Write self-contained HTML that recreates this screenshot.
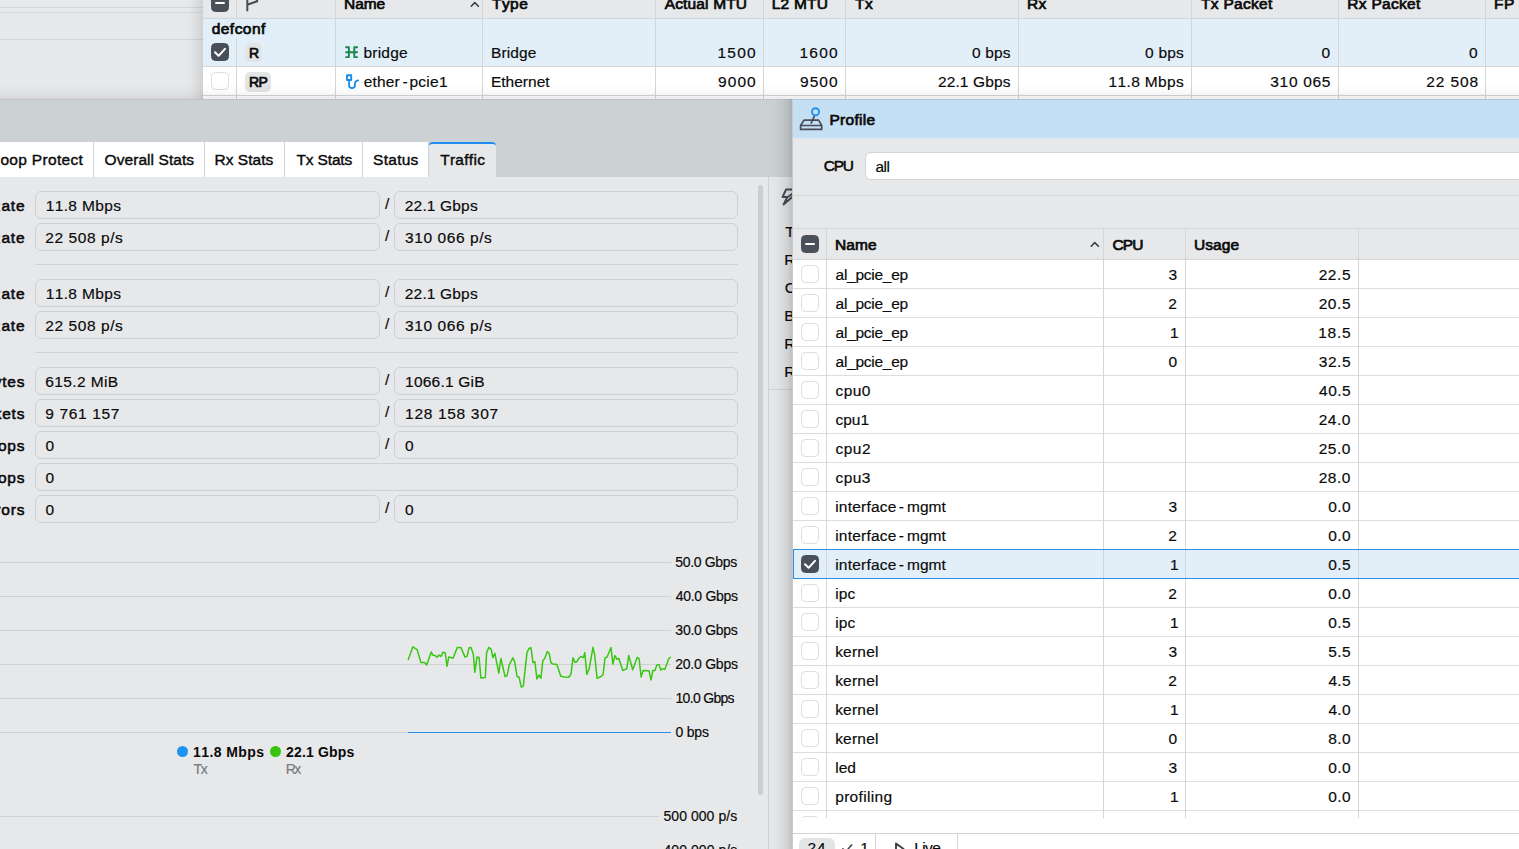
<!DOCTYPE html>
<html>
<head>
<meta charset="utf-8">
<title>WinBox</title>
<style>
*{box-sizing:border-box;margin:0;padding:0}
html,body{width:1519px;height:849px;overflow:hidden}
body{position:relative;background:#e7e8ea;font-family:"Liberation Sans",sans-serif;color:#0a0a0a;font-size:15.5px;font-kerning:none}
.abs{position:absolute}
.t{position:absolute;white-space:pre;line-height:20px;height:20px;font-weight:400;-webkit-text-stroke-width:.18px}
.b{font-weight:700;-webkit-text-stroke-width:0}
.m{-webkit-text-stroke-width:.4px}
.m2{-webkit-text-stroke-width:.55px}
.sb{-webkit-text-stroke-width:.72px}
#tl{left:0;top:0;width:203px;height:99px;background:#e7e8ea}
#tl i{position:absolute;left:0;width:203px;height:1px;background:#d3d5d8}
#tlshadow{left:187px;top:0;width:16px;height:99px;background:linear-gradient(to right,rgba(0,0,0,0),rgba(0,0,0,.03) 45%,rgba(0,0,0,.10))}
#tt{left:203px;top:0;width:1316px;height:99px;background:#fff}
#tt .hd{left:0;top:0;width:1316px;height:18px;background:#e7e8ea}
#tt .hl{left:0;width:1316px;height:1px;background:#d4d5d7}
#tt .vl{top:0;width:1px;height:99px;background:#d4d5d7}
#tt .sel{left:0;top:19px;width:1316px;height:47px;background:#e2eff9}
.cb{position:absolute;width:18px;height:18px;border-radius:4.5px;border:1px solid #dcdddf;background:#fff}
.cb.on{background:#4a505a;border-color:#4a505a}
.dash{position:absolute;left:3px;top:7px;width:10px;height:2px;background:#fff;border-radius:1px}
.badge{position:absolute;border-radius:5px;background:#e3e4e6}
#band{left:0;top:99px;width:1519px;height:78px;background:#ccd1d4}
#bandline{left:0;top:99px;width:1519px;height:1px;background:#c0c4c8}
.f{position:absolute;height:28px;border:1px solid #cdd1d5;border-radius:6px;background:#e7e8ea}
.sep{position:absolute;left:35px;width:703px;height:1px;background:#d0d2d5}
.gl{position:absolute;left:0;height:1px;background:#cfd1d4}
#pshadow{left:766px;top:99px;width:26px;height:750px;background:linear-gradient(to right,rgba(0,0,0,0) 0%,rgba(0,0,0,.015) 35%,rgba(0,0,0,.05) 62%,rgba(0,0,0,.105) 85%,rgba(0,0,0,.17) 100%)}
#pw{left:792px;top:99px;width:728px;height:750px;background:#e7e8ea;border-left:1px solid rgba(0,0,0,.13)}
#pw .ti{left:0;top:0;width:727px;height:39px;background:#c5dff4;border-top:1px solid rgba(0,0,0,.1)}
#pw .hl{left:0;width:727px;height:1px;background:#d4d5d7}
#pw .vl{width:1px;background:#d4d5d7}
</style>
</head>
<body>
<!-- top-left pane -->
<div id="tl" class="abs"><i style="top:7px"></i><i style="top:12px"></i><i style="top:39px"></i></div>
<div id="tlshadow" class="abs"></div>
<!-- interface table -->
<div id="tt" class="abs">
<div class="abs sel"></div><div class="abs hd"></div>
<div class="abs hl" style="top:18px"></div>
<div class="abs hl" style="top:66px"></div>
<div class="abs hl" style="top:95px"></div>
<div class="abs vl" style="left:33px;top:38px;height:61px"></div><div class="abs vl" style="left:33px;top:0;height:18px"></div>
<div class="abs vl" style="left:132px"></div>
<div class="abs vl" style="left:279px"></div>
<div class="abs vl" style="left:452px"></div>
<div class="abs vl" style="left:560px"></div>
<div class="abs vl" style="left:642px"></div>
<div class="abs vl" style="left:815px"></div>
<div class="abs vl" style="left:988px"></div>
<div class="abs vl" style="left:1135px"></div>
<div class="abs vl" style="left:1282px"></div>
<div class="cb on" style="left:8px;top:-6px"><b class="dash"></b></div>
<svg class="abs" style="left:40px;top:-6px" width="20" height="18" viewBox="0 0 20 18"><path d="M4.3 0V16.4 M4.3 10.7L14.2 7.2V0" fill="none" stroke="#474d56" stroke-width="2" stroke-linecap="round" stroke-linejoin="round"/></svg>
<svg class="abs" style="left:266px;top:0" width="12" height="8" viewBox="0 0 12 8"><path d="M2.2 6.2L5.8 2.6L9.4 6.2" fill="none" stroke="#3c4148" stroke-width="1.6" stroke-linecap="round" stroke-linejoin="round"/></svg>
<div class="cb on" style="left:8px;top:43px"><svg width="18" height="18" viewBox="0 0 18 18" style="position:absolute;left:-1px;top:-1px"><path d="M4 9.3L7.6 12.8L14 5.8" fill="none" stroke="#fff" stroke-width="2" stroke-linecap="round" stroke-linejoin="round"/></svg></div>
<div class="cb" style="left:8px;top:72px"></div>
<div class="badge" style="left:42px;top:43px;width:17px;height:19px"></div>
<div class="badge" style="left:42px;top:72px;width:26px;height:19.5px"></div>
<svg class="abs" style="left:141px;top:44px" width="18" height="16" viewBox="0 0 18 16"><path d="M2.1 3.3H4.9 M2.1 8.2H13.1 M2.1 13.1H4.9 M10.3 3.3H13.1 M10.3 13.1H13.1 M4.9 3.3V13.1 M10.3 3.3V13.1" fill="none" stroke="#17874e" stroke-width="1.9" stroke-linecap="round"/></svg>
<svg class="abs" style="left:141px;top:72px" width="18" height="18" viewBox="0 0 18 18"><path d="M3 3.2H7.2V8H3Z" fill="none" stroke="#1c8bea" stroke-width="1.9" stroke-linejoin="round"/><path d="M5.1 8.8V13.2A2.9 2.9 0 0 0 10.9 13.2V11.8Q10.9 9 14.2 8.4" fill="none" stroke="#1c8bea" stroke-width="1.8" stroke-linecap="round"/></svg>
</div>
<!-- interface table text -->
<span class="t sb" style="left:344.08px;top:-6.00px;font-size:15.5px;letter-spacing:-0.129px;">Name</span>
<span class="t sb" style="left:492.00px;top:-6.00px;font-size:15.5px;letter-spacing:0.450px;">Type</span>
<span class="t sb" style="left:664.72px;top:-6.00px;font-size:15.5px;letter-spacing:0.152px;">Actual MTU</span>
<span class="t sb" style="left:771.78px;top:-6.00px;font-size:15.5px;letter-spacing:0.209px;">L2 MTU</span>
<span class="t sb" style="left:855.00px;top:-6.00px;font-size:15.5px;letter-spacing:0.450px;">Tx</span>
<span class="t sb" style="left:1026.98px;top:-6.00px;font-size:15.5px;letter-spacing:0.450px;">Rx</span>
<span class="t sb" style="left:1201.00px;top:-6.00px;font-size:15.5px;letter-spacing:0.300px;">Tx Packet</span>
<span class="t sb" style="left:1347.28px;top:-6.00px;font-size:15.5px;letter-spacing:0.300px;">Rx Packet</span>
<span class="t sb" style="left:1494.08px;top:-6.00px;font-size:15.5px;letter-spacing:0.450px;">FP</span>
<span class="t sb" style="left:211.70px;top:19.00px;font-size:15.5px;letter-spacing:0.464px;">defconf</span>
<span class="t sb" style="left:248.90px;top:43.00px;font-size:14px;">R</span>
<span class="t sb" style="left:248.90px;top:72.00px;font-size:14px;letter-spacing:-0.600px;">RP</span>
<span class="t" style="left:363.50px;top:43.00px;font-size:15.5px;letter-spacing:0.200px;">bridge</span>
<span class="t" style="left:490.93px;top:43.00px;font-size:15.5px;letter-spacing:0.131px;">Bridge</span>
<span class="t" style="left:717.52px;top:43.00px;font-size:15.5px;letter-spacing:1.235px;">1500</span>
<span class="t" style="left:799.52px;top:43.00px;font-size:15.5px;letter-spacing:1.202px;">1600</span>
<span class="t" style="left:972.09px;top:43.00px;font-size:15.5px;letter-spacing:0.137px;">0 bps</span>
<span class="t" style="left:1145.09px;top:43.00px;font-size:15.5px;letter-spacing:0.187px;">0 bps</span>
<span class="t" style="left:1321.59px;top:43.00px;font-size:15.5px;letter-spacing:0.091px;">0</span>
<span class="t" style="left:1468.89px;top:43.00px;font-size:15.5px;letter-spacing:0.491px;">0</span>
<span class="t" style="left:363.84px;top:72.00px;font-size:15.5px;letter-spacing:0.097px;">ether</span>
<span class="t" style="left:402.41px;top:72.00px;font-size:15.5px;letter-spacing:-0.784px;">-</span>
<span class="t" style="left:409.40px;top:72.00px;font-size:15.5px;letter-spacing:0.300px;">pcie1</span>
<span class="t" style="left:490.93px;top:72.00px;font-size:15.5px;letter-spacing:0.013px;">Ethernet</span>
<span class="t" style="left:717.97px;top:72.00px;font-size:15.5px;letter-spacing:1.084px;">9000</span>
<span class="t" style="left:799.97px;top:72.00px;font-size:15.5px;letter-spacing:1.050px;">9500</span>
<span class="t" style="left:937.92px;top:72.00px;font-size:15.5px;letter-spacing:0.140px;">22.1 Gbps</span>
<span class="t" style="left:1108.52px;top:72.00px;font-size:15.5px;letter-spacing:0.358px;">11.8 Mbps</span>
<span class="t" style="left:1270.31px;top:72.00px;font-size:15.5px;letter-spacing:0.669px;">310 065</span>
<span class="t" style="left:1426.22px;top:72.00px;font-size:15.5px;letter-spacing:0.889px;">22 508</span>
<!-- band and tabs -->
<div class="abs" style="left:0;top:84px;width:1519px;height:15px;background:linear-gradient(to bottom,rgba(0,0,0,0),rgba(0,0,0,.025) 55%,rgba(0,0,0,.075))"></div>
<div id="band" class="abs"></div><div id="bandline" class="abs"></div>
<div class="abs" style="left:0;top:142px;width:429px;height:35px;background:#fff"></div>
<div class="abs" style="left:93px;top:142px;width:1px;height:35px;background:#cfd2d5"></div>
<div class="abs" style="left:204px;top:142px;width:1px;height:35px;background:#cfd2d5"></div>
<div class="abs" style="left:284px;top:142px;width:1px;height:35px;background:#cfd2d5"></div>
<div class="abs" style="left:362px;top:142px;width:1px;height:35px;background:#cfd2d5"></div>
<div class="abs" style="left:428px;top:142px;width:1px;height:35px;background:#cfd2d5"></div>
<div class="abs" style="left:429px;top:142px;width:67px;height:35px;background:#e7e8ea;border-top:2px solid #1f8ef0;border-radius:4px 4px 0 0"></div>
<span class="t m" style="left:0.45px;top:150.00px;font-size:15.5px;letter-spacing:0.309px;">oop Protect</span>
<span class="t m" style="left:104.57px;top:150.00px;font-size:15.5px;letter-spacing:0.064px;">Overall Stats</span>
<span class="t m" style="left:214.53px;top:150.00px;font-size:15.5px;letter-spacing:0.023px;">Rx Stats</span>
<span class="t m" style="left:296.55px;top:150.00px;font-size:15.5px;letter-spacing:-0.163px;">Tx Stats</span>
<span class="t m" style="left:373.10px;top:150.00px;font-size:15.5px;letter-spacing:0.264px;">Status</span>
<span class="t m" style="left:440.15px;top:150.00px;font-size:15.5px;letter-spacing:0.283px;">Traffic</span>
<!-- traffic fields -->
<div class="f" style="left:35px;top:191px;width:345px"></div><div class="f" style="left:394px;top:191px;width:344px"></div>
<span class="t" style="left:385.00px;top:194.00px;font-size:15.5px;letter-spacing:-1.006px;">/</span>
<span class="t" style="left:404.82px;top:196.00px;font-size:15.5px;letter-spacing:0.165px;">22.1 Gbps</span>
<span class="t" style="left:45.72px;top:196.00px;font-size:15.5px;letter-spacing:0.358px;">11.8 Mbps</span>
<span class="t m2" style="left:-10.55px;top:196.00px;font-size:15.5px;letter-spacing:0.8px">Rate</span>
<div class="f" style="left:35px;top:223px;width:345px"></div><div class="f" style="left:394px;top:223px;width:344px"></div>
<span class="t" style="left:385.00px;top:226.00px;font-size:15.5px;letter-spacing:-1.006px;">/</span>
<span class="t" style="left:405.01px;top:228.00px;font-size:15.5px;letter-spacing:0.584px;">310 066 p/s</span>
<span class="t" style="left:45.32px;top:228.00px;font-size:15.5px;letter-spacing:0.572px;">22 508 p/s</span>
<span class="t m2" style="left:-10.55px;top:228.00px;font-size:15.5px;letter-spacing:0.8px">Rate</span>
<div class="f" style="left:35px;top:279px;width:345px"></div><div class="f" style="left:394px;top:279px;width:344px"></div>
<span class="t" style="left:385.00px;top:282.00px;font-size:15.5px;letter-spacing:-1.006px;">/</span>
<span class="t" style="left:404.82px;top:284.00px;font-size:15.5px;letter-spacing:0.165px;">22.1 Gbps</span>
<span class="t" style="left:45.72px;top:284.00px;font-size:15.5px;letter-spacing:0.358px;">11.8 Mbps</span>
<span class="t m2" style="left:-10.55px;top:284.00px;font-size:15.5px;letter-spacing:0.8px">Rate</span>
<div class="f" style="left:35px;top:311px;width:345px"></div><div class="f" style="left:394px;top:311px;width:344px"></div>
<span class="t" style="left:385.00px;top:314.00px;font-size:15.5px;letter-spacing:-1.006px;">/</span>
<span class="t" style="left:405.01px;top:316.00px;font-size:15.5px;letter-spacing:0.584px;">310 066 p/s</span>
<span class="t" style="left:45.32px;top:316.00px;font-size:15.5px;letter-spacing:0.572px;">22 508 p/s</span>
<span class="t m2" style="left:-10.55px;top:316.00px;font-size:15.5px;letter-spacing:0.8px">Rate</span>
<div class="f" style="left:35px;top:367px;width:345px"></div><div class="f" style="left:394px;top:367px;width:344px"></div>
<span class="t" style="left:385.00px;top:370.00px;font-size:15.5px;letter-spacing:-1.006px;">/</span>
<span class="t" style="left:405.12px;top:372.00px;font-size:15.5px;letter-spacing:0.205px;">1066.1 GiB</span>
<span class="t" style="left:45.31px;top:372.00px;font-size:15.5px;letter-spacing:0.390px;">615.2 MiB</span>
<span class="t m2" style="left:-17.51px;top:372.00px;font-size:15.5px;letter-spacing:0.8px">Bytes</span>
<div class="f" style="left:35px;top:399px;width:345px"></div><div class="f" style="left:394px;top:399px;width:344px"></div>
<span class="t" style="left:385.00px;top:402.00px;font-size:15.5px;letter-spacing:-1.006px;">/</span>
<span class="t" style="left:405.12px;top:404.00px;font-size:15.5px;letter-spacing:0.676px;">128 158 307</span>
<span class="t" style="left:45.37px;top:404.00px;font-size:15.5px;letter-spacing:0.644px;">9 761 157</span>
<span class="t m2" style="left:-35.48px;top:404.00px;font-size:15.5px;letter-spacing:0.8px">Packets</span>
<div class="f" style="left:35px;top:431px;width:345px"></div><div class="f" style="left:394px;top:431px;width:344px"></div>
<span class="t" style="left:385.00px;top:434.00px;font-size:15.5px;letter-spacing:-1.006px;">/</span>
<span class="t" style="left:404.99px;top:436.00px;font-size:15.5px;letter-spacing:-0.309px;">0</span>
<span class="t" style="left:45.49px;top:436.00px;font-size:15.5px;letter-spacing:0.191px;">0</span>
<span class="t m2" style="left:-20.09px;top:436.00px;font-size:15.5px;letter-spacing:0.8px">Drops</span>
<div class="f" style="left:35px;top:463px;width:703px"></div>
<span class="t" style="left:45.49px;top:468.00px;font-size:15.5px;letter-spacing:0.191px;">0</span>
<span class="t m2" style="left:-20.09px;top:468.00px;font-size:15.5px;letter-spacing:0.8px">Drops</span>
<div class="f" style="left:35px;top:495px;width:345px"></div><div class="f" style="left:394px;top:495px;width:344px"></div>
<span class="t" style="left:385.00px;top:498.00px;font-size:15.5px;letter-spacing:-1.006px;">/</span>
<span class="t" style="left:404.99px;top:500.00px;font-size:15.5px;letter-spacing:-0.309px;">0</span>
<span class="t" style="left:45.49px;top:500.00px;font-size:15.5px;letter-spacing:0.191px;">0</span>
<span class="t m2" style="left:-21.73px;top:500.00px;font-size:15.5px;letter-spacing:0.8px">Errors</span>
<div class="sep" style="top:264px"></div><div class="sep" style="top:352px"></div>
<!-- traffic chart -->
<div class="gl" style="top:562px;width:671px"></div>
<div class="gl" style="top:596px;width:671px"></div>
<div class="gl" style="top:630px;width:671px"></div>
<div class="gl" style="top:664px;width:671px"></div>
<div class="gl" style="top:698px;width:671px"></div>
<div class="gl" style="top:732px;width:671px"></div>
<div class="gl" style="top:816px;width:659px"></div>
<span class="t" style="left:675.24px;top:552.30px;font-size:14px;letter-spacing:-0.329px;">50.0 Gbps</span>
<span class="t" style="left:675.78px;top:586.30px;font-size:14px;letter-spacing:-0.297px;">40.0 Gbps</span>
<span class="t" style="left:675.37px;top:620.20px;font-size:14px;letter-spacing:-0.270px;">30.0 Gbps</span>
<span class="t" style="left:675.20px;top:654.10px;font-size:14px;letter-spacing:-0.224px;">20.0 Gbps</span>
<span class="t" style="left:675.53px;top:687.60px;font-size:14px;letter-spacing:-0.691px;">10.0 Gbps</span>
<span class="t" style="left:675.45px;top:721.60px;font-size:14px;letter-spacing:-0.199px;">0 bps</span>
<span class="t" style="left:663.44px;top:806.20px;font-size:14px;letter-spacing:0.059px;">500 000 p/s</span>
<span class="t" style="left:663.48px;top:840.10px;font-size:14px;letter-spacing:0.056px;">400 000 p/s</span>
<svg class="abs" style="left:400px;top:640px" width="280" height="100" viewBox="0 0 280 100"><polyline points="8.3,19.4 12.9,6.8 17.1,9.6 21.0,22.5 24.4,22.6 26.7,25.0 31.2,11.9 32.7,15.1 35.0,15.5 36.9,17.1 39.2,15.1 41.0,16.4 42.9,12.3 45.2,12.7 47.0,26.3 48.8,16.9 53.0,18.2 57.3,7.4 60.8,7.4 65.0,17.1 67.1,16.4 69.1,7.7 71.0,7.4 73.3,13.9 74.8,32.3 77.0,17.1 79.1,17.6 80.9,38.1 85.3,37.6 86.6,12.5 88.9,7.4 91.2,9.3 92.9,17.6 94.9,13.4 98.8,33.2 100.9,18.5 105.1,36.7 107.1,35.6 109.2,25.0 112.9,17.9 114.7,21.7 117.1,36.5 119.1,37.2 121.2,47.1 123.3,46.2 127.0,12.5 129.0,8.4 131.0,7.8 133.0,22.6 134.9,21.7 136.9,38.9 138.9,35.0 140.9,38.3 142.8,20.9 144.8,18.2 147.3,11.6 149.3,13.8 150.9,22.6 152.9,24.1 156.9,24.4 160.8,36.3 164.6,37.0 168.7,37.3 171.0,34.0 173.0,17.7 174.9,22.2 176.9,21.7 178.9,18.2 180.9,16.5 183.3,17.7 184.8,12.6 186.8,34.5 189.1,29.1 193.0,7.3 194.7,15.2 197.1,38.4 201.1,36.5 203.1,34.5 205.0,17.9 207.0,17.2 211.0,7.6 212.9,24.1 214.9,15.5 216.9,19.2 218.9,18.5 222.8,30.5 226.8,28.6 228.7,15.5 232.7,29.8 237.1,17.5 239.1,18.7 241.1,37.0 243.1,30.5 249.0,30.7 251.0,39.9 252.9,30.5 254.9,30.4 256.9,25.1 258.9,24.6 260.8,30.1 262.8,28.6 264.8,29.4 268.7,18.7 270.4,17.2" fill="none" stroke="#38c713" stroke-width="1.5" stroke-linejoin="round" stroke-linecap="round"/><path d="M8 92.5H271" stroke="#2d8fe6" stroke-width="1.2" fill="none"/></svg>
<div class="abs" style="left:177px;top:746px;width:11px;height:11px;border-radius:50%;background:#1f93f2"></div>
<div class="abs" style="left:270px;top:746px;width:11px;height:11px;border-radius:50%;background:#35c50e"></div>
<span class="t b" style="left:193.02px;top:741.60px;font-size:14px;letter-spacing:0.408px;">11.8 Mbps</span>
<span class="t b" style="left:286.11px;top:741.60px;font-size:14px;letter-spacing:0.155px;">22.1 Gbps</span>
<span class="t" style="left:193.39px;top:759.00px;font-size:14px;letter-spacing:-1.287px;color:#797b7f;">Tx</span>
<span class="t" style="left:285.75px;top:759.00px;font-size:14px;letter-spacing:-1.712px;color:#797b7f;">Rx</span>
<div class="abs" style="left:758px;top:185px;width:5px;height:610px;border-radius:3px;background:#cbcdd0"></div>
<div class="abs" style="left:768px;top:177px;width:1px;height:672px;background:#d0d2d5"></div>
<div class="abs" style="left:769px;top:389px;width:30px;height:1px;background:#d0d2d5"></div>
<svg class="abs" style="left:780px;top:188px" width="16" height="18" viewBox="0 0 16 18"><path d="M14 1.6H6L2.6 9H7.4L3.6 16.4L14 7.6" fill="none" stroke="#474d56" stroke-width="2" stroke-linejoin="round" stroke-linecap="round"/><path d="M8 9L14 4.5" fill="none" stroke="#474d56" stroke-width="2"/></svg>
<span class="t" style="left:785.15px;top:222.00px;font-size:15.5px;">T</span>
<span class="t" style="left:784.23px;top:250.00px;font-size:15.5px;">R</span>
<span class="t" style="left:784.71px;top:278.00px;font-size:15.5px;">C</span>
<span class="t" style="left:784.23px;top:306.00px;font-size:15.5px;">B</span>
<span class="t" style="left:784.23px;top:334.00px;font-size:15.5px;">R</span>
<span class="t" style="left:784.23px;top:362.00px;font-size:15.5px;">R</span>
<!-- profile window -->
<div id="pshadow" class="abs"></div>
<div id="pw" class="abs">
<div class="abs ti"></div>
<svg class="abs" style="left:5px;top:6px" width="28" height="28" viewBox="0 0 28 28"><path d="M6 15.1H20.6L23.7 20.5V24.4H2.6V20.5Z M2.6 20.5H23.7" fill="none" stroke="#474d56" stroke-width="1.7" stroke-linejoin="round"/><path d="M16.6 10.6L13.2 18" fill="none" stroke="#474d56" stroke-width="1.7" stroke-linecap="round"/><circle cx="17.5" cy="6.75" r="3.55" fill="#c5dff4" stroke="#1f93f2" stroke-width="1.9"/></svg>
<div class="abs" style="left:72px;top:53px;width:700px;height:28px;background:#fff;border:1px solid #d3d5d8;border-radius:6px"></div>
<div class="abs hl" style="top:96px"></div>
<div class="abs" style="left:0;top:129px;width:727px;height:590px;background:#fff"></div>
<div class="abs" style="left:0;top:129px;width:727px;height:32px;background:#e7e8ea;border-top:1px solid #d4d5d7;border-bottom:1px solid #d4d5d7"></div>
<div class="abs" style="left:0;top:450px;width:727px;height:30px;background:#e2eff9"></div>
<div class="abs hl" style="top:189px;background:#dcdddf"></div>
<div class="abs hl" style="top:218px;background:#dcdddf"></div>
<div class="abs hl" style="top:247px;background:#dcdddf"></div>
<div class="abs hl" style="top:276px;background:#dcdddf"></div>
<div class="abs hl" style="top:305px;background:#dcdddf"></div>
<div class="abs hl" style="top:334px;background:#dcdddf"></div>
<div class="abs hl" style="top:363px;background:#dcdddf"></div>
<div class="abs hl" style="top:392px;background:#dcdddf"></div>
<div class="abs hl" style="top:421px;background:#dcdddf"></div>
<div class="abs hl" style="top:508px;background:#dcdddf"></div>
<div class="abs hl" style="top:537px;background:#dcdddf"></div>
<div class="abs hl" style="top:566px;background:#dcdddf"></div>
<div class="abs hl" style="top:595px;background:#dcdddf"></div>
<div class="abs hl" style="top:624px;background:#dcdddf"></div>
<div class="abs hl" style="top:653px;background:#dcdddf"></div>
<div class="abs hl" style="top:682px;background:#dcdddf"></div>
<div class="abs hl" style="top:711px;background:#dcdddf"></div>
<div class="abs vl" style="left:33px;top:129px;height:590px"></div>
<div class="abs vl" style="left:310px;top:129px;height:590px"></div>
<div class="abs vl" style="left:392px;top:129px;height:590px"></div>
<div class="abs vl" style="left:565px;top:129px;height:590px"></div>
<div class="abs" style="left:0;top:450px;width:727px;height:30px;border-top:1px solid #2b8fe8;border-bottom:1px solid #2b8fe8;border-left:1px solid #2b8fe8"></div>
<div class="abs" style="left:0;top:719px;width:727px;height:31px;background:#fff"></div>
<div class="abs hl" style="top:734px;background:#d0d2d5"></div>
<div class="abs vl" style="left:82px;top:734px;height:16px"></div><div class="abs vl" style="left:164px;top:734px;height:16px"></div>
<div class="abs" style="left:6px;top:739px;width:36px;height:20px;border-radius:6px;background:#e3e4e6"></div>
<div class="cb on" style="left:8px;top:136px"><b class="dash"></b></div>
<svg class="abs" style="left:296px;top:141px" width="12" height="8" viewBox="0 0 12 8"><path d="M2.2 6.2L5.8 2.6L9.4 6.2" fill="none" stroke="#3c4148" stroke-width="1.6" stroke-linecap="round" stroke-linejoin="round"/></svg>
<div class="cb" style="left:8px;top:165.5px"></div>
<div class="cb" style="left:8px;top:194.5px"></div>
<div class="cb" style="left:8px;top:223.5px"></div>
<div class="cb" style="left:8px;top:252.5px"></div>
<div class="cb" style="left:8px;top:281.5px"></div>
<div class="cb" style="left:8px;top:310.5px"></div>
<div class="cb" style="left:8px;top:339.5px"></div>
<div class="cb" style="left:8px;top:368.5px"></div>
<div class="cb" style="left:8px;top:397.5px"></div>
<div class="cb" style="left:8px;top:426.5px"></div>
<div class="cb on" style="left:8px;top:455.5px"><svg width="18" height="18" viewBox="0 0 18 18" style="position:absolute;left:-1px;top:-1px"><path d="M4 9.3L7.6 12.8L14 5.8" fill="none" stroke="#fff" stroke-width="2" stroke-linecap="round" stroke-linejoin="round"/></svg></div>
<div class="cb" style="left:8px;top:484.5px"></div>
<div class="cb" style="left:8px;top:513.5px"></div>
<div class="cb" style="left:8px;top:542.5px"></div>
<div class="cb" style="left:8px;top:571.5px"></div>
<div class="cb" style="left:8px;top:600.5px"></div>
<div class="cb" style="left:8px;top:629.5px"></div>
<div class="cb" style="left:8px;top:658.5px"></div>
<div class="cb" style="left:8px;top:687.5px"></div>
<div class="abs" style="left:0;top:711px;width:40px;height:8px;overflow:hidden"><div class="cb" style="left:8px;top:5.5px"></div></div>
<svg class="abs" style="left:46px;top:742px" width="16" height="12" viewBox="0 0 16 12"><path d="M3.9 7.8L6.8 10.7L12.6 3.9" fill="none" stroke="#3c4148" stroke-width="1.5" stroke-linecap="round" stroke-linejoin="round"/></svg>
<svg class="abs" style="left:100px;top:741.5px" width="14" height="16" viewBox="0 0 14 16"><path d="M3 2.4V13.6L10.6 8Z" fill="none" stroke="#3c4148" stroke-width="1.9" stroke-linejoin="round"/></svg>
</div>
<span class="t sb" style="left:829.38px;top:110.00px;font-size:15.5px;letter-spacing:0.304px;">Profile</span>
<span class="t m2" style="left:823.81px;top:156.00px;font-size:15.5px;letter-spacing:-1.271px;">CPU</span>
<span class="t" style="left:875.44px;top:157.00px;font-size:15.5px;letter-spacing:-0.506px;">all</span>
<span class="t sb" style="left:834.98px;top:235.00px;font-size:15.5px;letter-spacing:0.071px;">Name</span>
<span class="t sb" style="left:1112.46px;top:235.00px;font-size:15.5px;letter-spacing:-0.921px;">CPU</span>
<span class="t sb" style="left:1194.05px;top:235.00px;font-size:15.5px;letter-spacing:0.045px;">Usage</span>
<span class="t" style="left:835.54px;top:265.00px;font-size:15.5px;letter-spacing:-0.263px;">al_pcie_ep</span>
<span class="t" style="left:1168.51px;top:265.00px;font-size:15.5px;letter-spacing:0.251px;">3</span>
<span class="t" style="left:1318.67px;top:265.00px;font-size:15.5px;letter-spacing:0.571px;">22.5</span>
<span class="t" style="left:835.54px;top:294.00px;font-size:15.5px;letter-spacing:-0.263px;">al_pcie_ep</span>
<span class="t" style="left:1168.32px;top:294.00px;font-size:15.5px;letter-spacing:0.539px;">2</span>
<span class="t" style="left:1318.67px;top:294.00px;font-size:15.5px;letter-spacing:0.571px;">20.5</span>
<span class="t" style="left:835.54px;top:323.00px;font-size:15.5px;letter-spacing:-0.263px;">al_pcie_ep</span>
<span class="t" style="left:1169.92px;top:323.00px;font-size:15.5px;letter-spacing:-2.783px;">1</span>
<span class="t" style="left:1318.27px;top:323.00px;font-size:15.5px;letter-spacing:0.705px;">18.5</span>
<span class="t" style="left:835.54px;top:352.00px;font-size:15.5px;letter-spacing:-0.263px;">al_pcie_ep</span>
<span class="t" style="left:1168.49px;top:352.00px;font-size:15.5px;letter-spacing:0.191px;">0</span>
<span class="t" style="left:1318.86px;top:352.00px;font-size:15.5px;letter-spacing:0.508px;">32.5</span>
<span class="t" style="left:835.54px;top:381.00px;font-size:15.5px;letter-spacing:0.418px;">cpu0</span>
<span class="t" style="left:1319.09px;top:381.00px;font-size:15.5px;letter-spacing:0.430px;">40.5</span>
<span class="t" style="left:835.54px;top:410.00px;font-size:15.5px;letter-spacing:-0.032px;">cpu1</span>
<span class="t" style="left:1318.67px;top:410.00px;font-size:15.5px;letter-spacing:0.556px;">24.0</span>
<span class="t" style="left:835.54px;top:439.00px;font-size:15.5px;letter-spacing:0.476px;">cpu2</span>
<span class="t" style="left:1318.67px;top:439.00px;font-size:15.5px;letter-spacing:0.556px;">25.0</span>
<span class="t" style="left:835.54px;top:468.00px;font-size:15.5px;letter-spacing:0.443px;">cpu3</span>
<span class="t" style="left:1318.67px;top:468.00px;font-size:15.5px;letter-spacing:0.556px;">28.0</span>
<span class="t" style="left:835.16px;top:497.00px;font-size:15.5px;letter-spacing:0.222px;">interface</span>
<span class="t" style="left:898.81px;top:497.00px;font-size:15.5px;letter-spacing:1.016px;">-</span>
<span class="t" style="left:906.97px;top:497.00px;font-size:15.5px;letter-spacing:0.031px;">mgmt</span>
<span class="t" style="left:1168.51px;top:497.00px;font-size:15.5px;letter-spacing:0.251px;">3</span>
<span class="t" style="left:1328.19px;top:497.00px;font-size:15.5px;letter-spacing:0.382px;">0.0</span>
<span class="t" style="left:835.16px;top:526.00px;font-size:15.5px;letter-spacing:0.222px;">interface</span>
<span class="t" style="left:898.81px;top:526.00px;font-size:15.5px;letter-spacing:1.016px;">-</span>
<span class="t" style="left:906.97px;top:526.00px;font-size:15.5px;letter-spacing:0.031px;">mgmt</span>
<span class="t" style="left:1168.32px;top:526.00px;font-size:15.5px;letter-spacing:0.539px;">2</span>
<span class="t" style="left:1328.19px;top:526.00px;font-size:15.5px;letter-spacing:0.382px;">0.0</span>
<span class="t" style="left:835.16px;top:555.00px;font-size:15.5px;letter-spacing:0.222px;">interface</span>
<span class="t" style="left:898.81px;top:555.00px;font-size:15.5px;letter-spacing:1.016px;">-</span>
<span class="t" style="left:906.97px;top:555.00px;font-size:15.5px;letter-spacing:0.031px;">mgmt</span>
<span class="t" style="left:1169.92px;top:555.00px;font-size:15.5px;letter-spacing:-2.783px;">1</span>
<span class="t" style="left:1328.19px;top:555.00px;font-size:15.5px;letter-spacing:0.405px;">0.5</span>
<span class="t" style="left:835.16px;top:584.00px;font-size:15.5px;letter-spacing:0.166px;">ipc</span>
<span class="t" style="left:1168.32px;top:584.00px;font-size:15.5px;letter-spacing:0.539px;">2</span>
<span class="t" style="left:1328.19px;top:584.00px;font-size:15.5px;letter-spacing:0.382px;">0.0</span>
<span class="t" style="left:835.16px;top:613.00px;font-size:15.5px;letter-spacing:0.166px;">ipc</span>
<span class="t" style="left:1169.92px;top:613.00px;font-size:15.5px;letter-spacing:-2.783px;">1</span>
<span class="t" style="left:1328.19px;top:613.00px;font-size:15.5px;letter-spacing:0.405px;">0.5</span>
<span class="t" style="left:835.16px;top:642.00px;font-size:15.5px;letter-spacing:0.213px;">kernel</span>
<span class="t" style="left:1168.51px;top:642.00px;font-size:15.5px;letter-spacing:0.251px;">3</span>
<span class="t" style="left:1328.18px;top:642.00px;font-size:15.5px;letter-spacing:0.412px;">5.5</span>
<span class="t" style="left:835.16px;top:671.00px;font-size:15.5px;letter-spacing:0.213px;">kernel</span>
<span class="t" style="left:1168.32px;top:671.00px;font-size:15.5px;letter-spacing:0.539px;">2</span>
<span class="t" style="left:1328.44px;top:671.00px;font-size:15.5px;letter-spacing:0.280px;">4.5</span>
<span class="t" style="left:835.16px;top:700.00px;font-size:15.5px;letter-spacing:0.213px;">kernel</span>
<span class="t" style="left:1169.92px;top:700.00px;font-size:15.5px;letter-spacing:-2.783px;">1</span>
<span class="t" style="left:1328.44px;top:700.00px;font-size:15.5px;letter-spacing:0.257px;">4.0</span>
<span class="t" style="left:835.16px;top:729.00px;font-size:15.5px;letter-spacing:0.213px;">kernel</span>
<span class="t" style="left:1168.49px;top:729.00px;font-size:15.5px;letter-spacing:0.191px;">0</span>
<span class="t" style="left:1328.13px;top:729.00px;font-size:15.5px;letter-spacing:0.416px;">8.0</span>
<span class="t" style="left:835.16px;top:758.00px;font-size:15.5px;letter-spacing:0.030px;">led</span>
<span class="t" style="left:1168.51px;top:758.00px;font-size:15.5px;letter-spacing:0.251px;">3</span>
<span class="t" style="left:1328.19px;top:758.00px;font-size:15.5px;letter-spacing:0.382px;">0.0</span>
<span class="t" style="left:835.20px;top:787.00px;font-size:15.5px;letter-spacing:0.327px;">profiling</span>
<span class="t" style="left:1169.92px;top:787.00px;font-size:15.5px;letter-spacing:-2.783px;">1</span>
<span class="t" style="left:1328.19px;top:787.00px;font-size:15.5px;letter-spacing:0.382px;">0.0</span>
<span class="t" style="left:807.42px;top:838.00px;font-size:15.5px;letter-spacing:0.893px;">24</span>
<span class="t" style="left:860.32px;top:838.00px;font-size:15.5px;letter-spacing:-3.183px;">1</span>
<span class="t" style="left:914.13px;top:838.00px;font-size:15.5px;letter-spacing:-0.591px;">Live</span>
</body>
</html>
